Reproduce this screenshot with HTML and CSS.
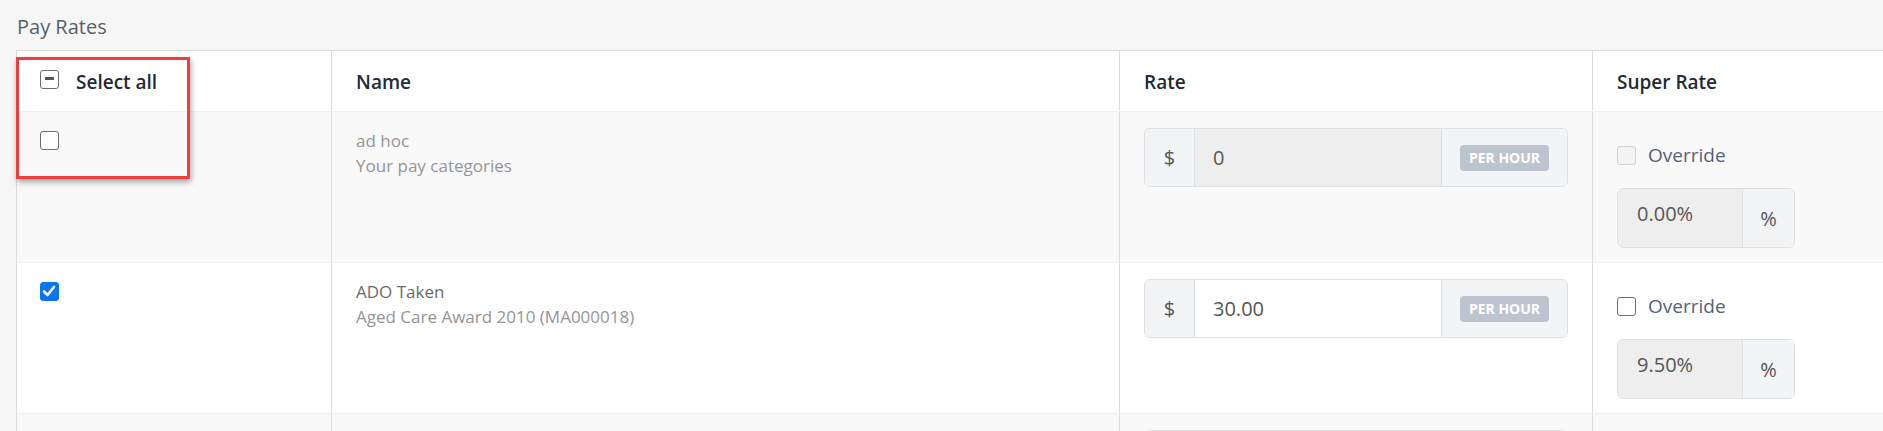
FILE: index.html
```html
<!DOCTYPE html>
<html lang="en">
<head>
    <meta charset="UTF-8">
    <meta name="viewport" content="width=device-width, initial-scale=1.0">
    <title>Pay Rates</title>
    <link rel="stylesheet" href="styles.css">
</head>
<body>
    <h2 class="section-title">Pay Rates</h2>

    <div class="rates-table">
        <div class="row head">
            <div class="cell select-cell">
                <span class="check indeterminate"></span>
                <span>Select all</span>
            </div>
            <div class="cell">Name</div>
            <div class="cell">Rate</div>
            <div class="cell">Super Rate</div>
        </div>

        <!-- ad hoc row (disabled) -->
        <div class="row odd">
            <div class="cell"><span class="check"></span></div>
            <div class="cell name-cell">
                <div class="muted">ad hoc</div>
                <div class="muted">Your pay categories</div>
            </div>
            <div class="cell">
                <div class="input-group">
                    <span class="addon prefix">$</span>
                    <span class="field disabled">0</span>
                    <span class="addon suffix"><span class="badge">PER HOUR</span></span>
                </div>
            </div>
            <div class="cell">
                <label class="override">
                    <span class="check disabled"></span>
                    <span>Override</span>
                </label>
                <div class="input-group small">
                    <span class="field disabled">0.00%</span>
                    <span class="addon pct">%</span>
                </div>
            </div>
        </div>

        <div class="row">
            <div class="cell">
                <span class="check checked">
                    <svg viewBox="0 0 18 18" width="18" height="18"><polyline points="4,9.5 7.5,13 14,5" fill="none" stroke="#fff" stroke-width="2.6" stroke-linecap="round" stroke-linejoin="round"/></svg>
                </span>
            </div>
            <div class="cell name-cell">
                <div class="title">ADO Taken</div>
                <div class="muted">Aged Care Award 2010 (MA000018)</div>
            </div>
            <div class="cell">
                <div class="input-group">
                    <span class="addon prefix">$</span>
                    <span class="field">30.00</span>
                    <span class="addon suffix"><span class="badge">PER HOUR</span></span>
                </div>
            </div>
            <div class="cell">
                <label class="override">
                    <span class="check"></span>
                    <span>Override</span>
                </label>
                <div class="input-group small">
                    <span class="field disabled">9.50%</span>
                    <span class="addon pct">%</span>
                </div>
            </div>
        </div>

        <!-- next row, only its top edge shows in the frame -->
        <div class="row odd">
            <div class="cell"></div>
            <div class="cell"></div>
            <div class="cell">
                <div class="input-group">
                    <span class="addon prefix"></span>
                    <span class="field"></span>
                    <span class="addon suffix"></span>
                </div>
            </div>
            <div class="cell"></div>
        </div>

        <div class="highlight"></div>
    </div>
</body>
</html>
```

FILE: styles.css
```css
body {
    margin: 0;
    background-color: #f6f6f6;
    font-family: "Open Sans", "Liberation Sans", sans-serif;
    color: #222b36;
    overflow: hidden;
}
.section-title {
    margin: 15px 0 11px 17px;
    font-size: 20px;
    line-height: 24px;
    font-weight: 500;
    color: #56606d;
}
.rates-table {
    position: relative;
    margin-left: 16px;
    border-top: 1px solid #dcdcdc;
    border-left: 1px solid #dcdcdc;
}
.row {
    display: grid;
    grid-template-columns: 314px 788px 473px 1fr;
    background-color: white;
    border-top: 1px solid #efefef;
}
.row.odd {
    background-color: #f9f9f9;
}
.row.head {
    border-top: none;
    height: 60px;
}
.cell {
    padding: 16px 24px 14px 24px;
    border-left: 1px solid #dcdcdc;
}
.cell:first-child {
    border-left: none;
    padding-left: 23px;
}
.head .cell {
    padding-top: 1px;
    padding-bottom: 0;
    display: flex;
    align-items: center;
    font-size: 19px;
    font-weight: 600;
}
.select-cell {
    gap: 17px;
}
.select-cell .check {
    margin-top: -5px;
}

/* checkboxes */
.check {
    display: inline-block;
    box-sizing: border-box;
    width: 19px;
    height: 19px;
    border: 1.5px solid #6e6e6e;
    border-radius: 3px;
    background-color: white;
    position: relative;
    margin-top: 3px;
    vertical-align: top;
}
.check.indeterminate::after {
    content: "";
    position: absolute;
    left: 3.5px;
    top: 6.5px;
    width: 9px;
    height: 3px;
    background-color: #555;
}
.check.checked {
    background-color: #0b75f2;
    border-color: #0b75f2;
}
.check.checked svg {
    position: absolute;
    left: -1.5px;
    top: -1.5px;
}
.check.disabled {
    border-color: #d3d3d3;
    background-color: #f4f4f4;
}

.name-cell {
    font-size: 17px;
    line-height: 25px;
}
.name-cell .muted {
    color: #959595;
}
.name-cell .title {
    color: #6b6b6b;
}

/* input groups */
.input-group {
    display: flex;
    height: 59px;
    box-sizing: border-box;
    border: 1px solid #dde1e6;
    border-radius: 6px;
    overflow: hidden;
    font-size: 20px;
    color: #555;
}
.addon {
    display: flex;
    align-items: center;
    justify-content: center;
    background-color: #f3f4f6;
}
.prefix {
    width: 49px;
    border-right: 1px solid #dde1e6;
}
.suffix {
    width: 125px;
    border-left: 1px solid #dde1e6;
}
.field {
    flex: 1;
    display: flex;
    align-items: center;
    padding-left: 18px;
    background-color: white;
}
.field.disabled {
    background-color: #eeeeee;
}
.badge {
    background-color: #bcc5cf;
    color: white;
    font-size: 14px;
    font-weight: 700;
    line-height: 26px;
    padding: 0 9px;
    border-radius: 4px;
    margin-top: 1px;
}

.override {
    display: flex;
    align-items: center;
    gap: 12px;
    height: 26px;
    margin-top: 14px;
    font-size: 19px;
    color: #56607a;
}
.override .check {
    margin-top: 0;
}
.input-group.small {
    width: 178px;
    height: 60px;
    margin-top: 20px;
}
.small .field {
    padding-left: 19px;
    padding-bottom: 10px;
}
.pct {
    width: 51px;
    border-left: 1px solid #dde1e6;
}

/* red annotation frame around the select column */
.highlight {
    position: absolute;
    left: -1px;
    top: 6px;
    width: 168px;
    height: 116px;
    border: 3px solid #ef3e42;
    box-shadow: 1px 3px 6px rgba(0, 0, 0, 0.35);
}
```
